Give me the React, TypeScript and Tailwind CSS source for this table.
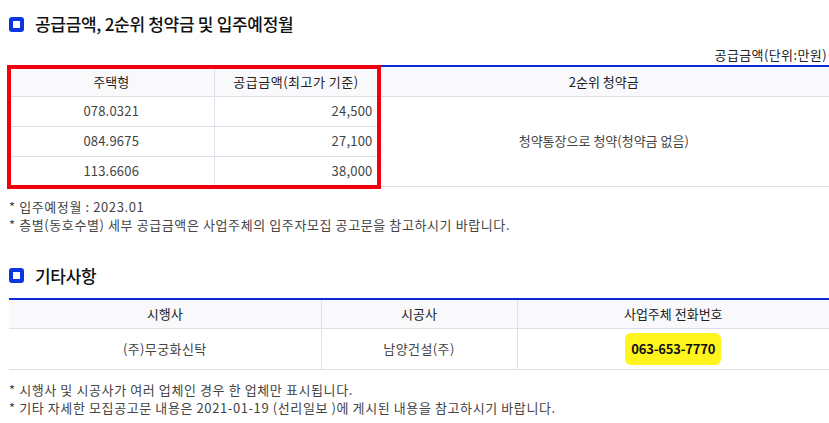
import React from "react";

const Icon = () => (
  <span className="inline-block w-[15px] h-[15px] rounded-[3px] border-[4px] border-[#0a35e0] bg-white box-border shrink-0" />
);

const Heading = ({ children }: { children: React.ReactNode }) => (
  <div className="flex items-center h-[24px] gap-[11px]">
    <Icon />
    <span className="text-[17px] font-medium tracking-[-0.3px] text-[#111] leading-[24px]">{children}</span>
  </div>
);

const rows1 = [
  ["078.0321", "24,500"],
  ["084.9675", "27,100"],
  ["113.6606", "38,000"],
];

export default function App() {
  return (
    <div
      className="relative w-[829px] h-[423px] bg-white overflow-hidden pl-[9px] text-[13px] text-[#444]"
      style={{ fontFamily: '"Noto Sans CJK KR", "Noto Sans", sans-serif' }}
    >
      <div className="pt-[12px]">
        <Heading>공급금액, 2순위 청약금 및 입주예정월</Heading>
      </div>
      <div className="mt-[9px] h-[20px] leading-[20px] text-right pr-[2px] text-[#222] tracking-[0.4px]">
        공급금액(단위:만원)
      </div>
      <table className="w-[820px] table-fixed border-collapse border-t-2 border-t-[#0a2ad8]">
        <colgroup>
          <col className="w-[205px]" />
          <col className="w-[164px]" />
          <col className="w-[451px]" />
        </colgroup>
        <tbody>
          <tr className="h-[30px] bg-[#f9f9fc] text-[#222]">
            <td className="border-b border-[#dfdfea] border-r text-center p-0">주택형</td>
            <td className="border-b border-[#dfdfea] border-r text-center p-0 tracking-[0.5px]">공급금액(최고가 기준)</td>
            <td className="border-b border-[#dfdfea] text-center p-0">2순위 청약금</td>
          </tr>
          {rows1.map((r, i) => (
            <tr key={i} className="h-[30px]">
              <td className="border-b border-r border-[#dfdfea] text-center p-0 tracking-[0.2px]">{r[0]}</td>
              <td className="border-b border-r border-[#dfdfea] text-right pr-[5px] p-0 tracking-[0.2px]">{r[1]}</td>
              {i === 0 && (
                <td rowSpan={3} className="border-b border-[#dfdfea] text-center p-0">
                  청약통장으로 청약(청약금 없음)
                </td>
              )}
            </tr>
          ))}
        </tbody>
      </table>
      <div className="mt-[11px] leading-[18px] tracking-[0.6px]">
        <div>* 입주예정월 : 2023.01</div>
        <div>* 층별(동호수별) 세부 공급금액은 사업주체의 입주자모집 공고문을 참고하시기 바랍니다.</div>
      </div>
      <div className="mt-[30px]">
        <Heading>기타사항</Heading>
      </div>
      <table className="mt-[10px] w-[820px] table-fixed border-collapse border-t-2 border-t-[#0a2ad8]">
        <colgroup>
          <col className="w-[312px]" />
          <col className="w-[196px]" />
          <col className="w-[312px]" />
        </colgroup>
        <tbody>
          <tr className="h-[30px] bg-[#f9f9fc] text-[#222]">
            <td className="border-b border-r border-[#dfdfea] text-center p-0">시행사</td>
            <td className="border-b border-r border-[#dfdfea] text-center p-0">시공사</td>
            <td className="border-b border-[#dfdfea] text-center p-0">사업주체 전화번호</td>
          </tr>
          <tr className="h-[41px]">
            <td className="border-b border-r border-[#dfdfea] text-center p-0 tracking-[0.4px]">(주)무궁화신탁</td>
            <td className="border-b border-r border-[#dfdfea] text-center p-0 tracking-[0.4px]">남양건설(주)</td>
            <td className="border-b border-[#dfdfea] text-center p-0">
              <span className="inline-flex items-center justify-center h-[32px] px-[6px] rounded-[6px] bg-[#fff41c] text-[#111] font-bold tracking-[-0.2px]">
                063-653-7770
              </span>
            </td>
          </tr>
        </tbody>
      </table>
      <div className="mt-[11px] leading-[18px] tracking-[0.6px]">
        <div>* 시행사 및 시공사가 여러 업체인 경우 한 업체만 표시됩니다.</div>
        <div>* 기타 자세한 모집공고문 내용은 2021-01-19 (선리일보 )에 게시된 내용을 참고하시기 바랍니다.</div>
      </div>
      <div className="absolute left-[7px] top-[65px] w-[374px] h-[124px] border-[4px] border-[#f2000d] pointer-events-none" />
    </div>
  );
}
